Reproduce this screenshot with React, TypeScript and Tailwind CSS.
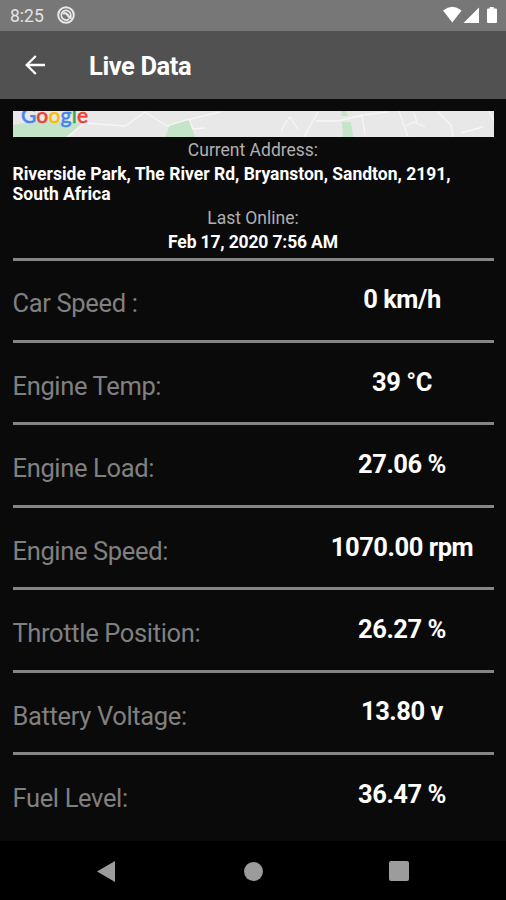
const rows = [
  ["Car Speed :", "0 km/h"],
  ["Engine Temp:", "39 °C"],
  ["Engine Load:", "27.06 %"],
  ["Engine Speed:", "1070.00 rpm"],
  ["Throttle Position:", "26.27 %"],
  ["Battery Voltage:", "13.80 v"],
  ["Fuel Level:", "36.47 %"],
];

function StatusBar() {
  return (
    <div className="flex h-[30.5px] shrink-0 items-center bg-[#777777] pl-[10px] pr-[7px]">
      <span className="text-[17.5px] leading-[30px] text-[#e4e4e4] pt-[1px]">8:25</span>
      <svg className="ml-[13px]" width="18" height="18" viewBox="0 0 18 18" fill="none" stroke="#e8e8e8">
        <circle cx="9" cy="9" r="7.8" strokeWidth="2" />
        <path d="M12 13A4.8 4.8 0 1 1 13.8 8.6V13" strokeWidth="1.7" />
        <path d="M6 7.8q2.4-1.6 4 .4l3.2 4" strokeWidth="2.2" />
      </svg>
      <svg className="ml-auto" width="56" height="18" viewBox="0 0 56 18" fill="#fff">
        <path d="M0 4.4Q9.3-2.8 18.6 4.4L9.3 16.5Z" />
        <path d="M20.5 17L36 1.5V17Z" />
        <path d="M44 3.5q0-1 1-1h1.7V1h4v1.500H53q1 0 1 1v12.500q0 1-1 1h-8q-1 0-1-1Z" />
      </svg>
    </div>
  );
}

function MapStrip() {
  return (
    <svg className="block h-[25.5px] w-full" viewBox="0 0 481 25.5" preserveAspectRatio="none">
      <rect width="482" height="26" fill="#e8e8e8" />
      <path d="M0 14L28 9L48 10L69 12L54 26H0Z" fill="#c4e5c8" />
      <path d="M152 26L157 14L176 9L182 26Z" fill="#c4e5c8" />
      <path d="M328 0h5l2 5h-6ZM329 11h9l2 15h-10Z" fill="#c4e5c8" />
      <g fill="none" stroke="#f6f6f6" strokeWidth="1.3">
        <path d="M54 26L72 12L112 15L132 1M132 1L154 15L173 9L207 1M176 8L180 18L192 17" />
        <path d="M268 20L273 11L277 6L285 18M291 26L305 1M303 10L325 10L350 4L375 1M349 4L352 24M386 0L395 26M393 15L401 11L412 16M401 2L404 11M424 0L438 14L440 26M448 22L470 16M476 0L482 12" />
      </g>
      <text x="8" y="12" fontFamily="Lato, sans-serif" fontSize="21" fontWeight="500" textLength="67" strokeWidth=".5">
        <tspan fill="#4285f4" stroke="#4285f4">G</tspan>
        <tspan fill="#ea4335" stroke="#ea4335">o</tspan>
        <tspan fill="#fbbc05" stroke="#fbbc05">o</tspan>
        <tspan fill="#4285f4" stroke="#4285f4">g</tspan>
        <tspan fill="#34a853" stroke="#34a853">l</tspan>
        <tspan fill="#ea4335" stroke="#ea4335">e</tspan>
      </text>
    </svg>
  );
}

export default function App() {
  return (
    <div className="flex h-[900px] w-[506px] flex-col overflow-hidden bg-[#0a0a0a] font-['Roboto',sans-serif]">
      <StatusBar />
      <header className="flex h-[68px] shrink-0 items-center bg-[#515151] pl-[25px]">
        <svg width="20" height="20" viewBox="0 0 20 20" fill="none" stroke="#fff" strokeWidth="2.3">
          <path d="M20 10H2M10.8 1L1.7 10L10.8 19" />
        </svg>
        <h1 className="ml-[44px] pt-[4px] text-[25.5px] font-bold tracking-[-0.4px] text-white">Live Data</h1>
      </header>
      <main className="flex-1 px-[12.5px] pt-[12.5px]">
        <MapStrip />
        <div className="h-[121px] text-[17.5px] leading-[20px]">
          <p className="pt-[3px] text-center text-[#b0b0b0]">Current Address:</p>
          <p className="whitespace-nowrap pt-[4px] font-bold text-white">
            Riverside Park, The River Rd, Bryanston, Sandton, 2191,<br />South Africa
          </p>
          <p className="pt-[4px] text-center text-[#b0b0b0]">Last Online:</p>
          <p className="pt-[4px] text-center font-bold tracking-[-0.15px] text-white">Feb 17, 2020 7:56 AM</p>
        </div>
        {rows.map(([label, value]) => (
          <div key={label} className="flex h-[82.45px] border-t-[3px] border-[#858585] text-[25.5px] leading-[30px]">
            <span className="w-[298px] pt-[27.9px] tracking-[-0.35px] text-[#808080]">{label}</span>
            <span className="flex-1 pt-[23.7px] text-center font-bold tracking-[-0.45px] text-white">{value}</span>
          </div>
        ))}
      </main>
      <nav className="flex h-[59px] shrink-0 items-center bg-black pl-[97px]">
        <svg className="mt-[1px]" width="18" height="21" viewBox="0 0 18 21" fill="#9c9c9c"><path d="M0 10.5L18 0V21Z" /></svg>
        <span className="ml-[129px] mt-[1px] size-[19px] rounded-full bg-[#9c9c9c]" />
        <span className="ml-[126px] mt-[1px] size-[19.5px] rounded-[2px] bg-[#9c9c9c]" />
      </nav>
    </div>
  );
}
